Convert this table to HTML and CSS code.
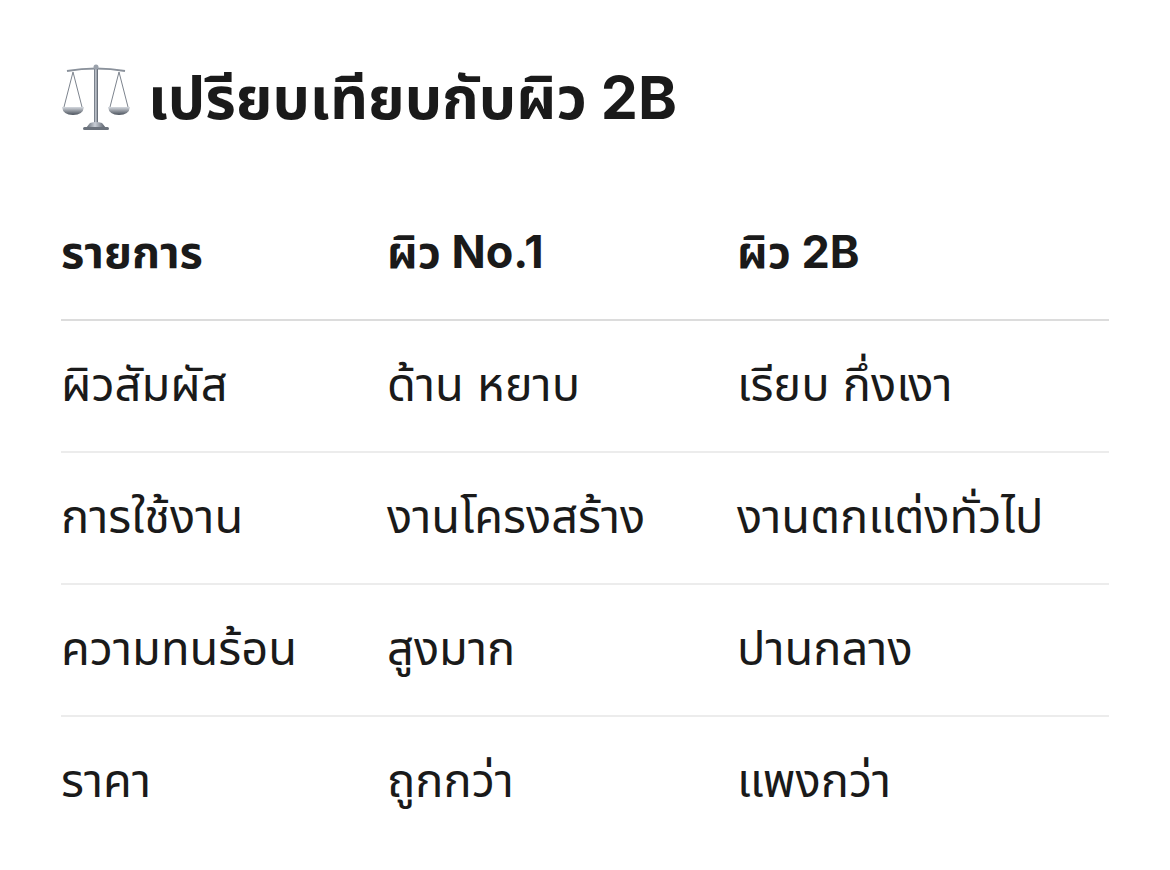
FILE: index.html
```html
<!DOCTYPE html>
<html lang="th">
<head>
<meta charset="utf-8">
<link rel="stylesheet" href="styles.css">
</head>
<body>
<main class="page">
  <h1 class="title">
    <svg class="scales" viewBox="0 0 70 70" width="70" height="70" aria-hidden="true">
      <defs>
        <linearGradient id="metal" x1="0" y1="0" x2="1" y2="0">
          <stop offset="0" stop-color="#5d6570"/>
          <stop offset="0.45" stop-color="#c9ced6"/>
          <stop offset="1" stop-color="#4f5661"/>
        </linearGradient>
        <linearGradient id="pan" x1="0" y1="0" x2="0" y2="1">
          <stop offset="0" stop-color="#d5d9df"/>
          <stop offset="1" stop-color="#4a515b"/>
        </linearGradient>
      </defs>
      <path d="M6 8 Q35 3 64 8" stroke="#8a919b" stroke-width="2" fill="none"/>
      <rect x="33" y="3" width="4" height="60" rx="1.5" fill="url(#metal)"/>
      <circle cx="35" cy="4" r="2.5" fill="#9aa1ab"/>
      <path d="M12 9 L3 44 M12 9 L21 44" stroke="#7d848e" stroke-width="1" fill="none"/>
      <path d="M58 9 L49 44 M58 9 L67 44" stroke="#7d848e" stroke-width="1" fill="none"/>
      <path d="M1 44 H23 Q22 52 12 52 Q2 52 1 44 Z" fill="url(#pan)"/>
      <path d="M47 44 H69 Q68 52 58 52 Q48 52 47 44 Z" fill="url(#pan)"/>
      <path d="M29 60 Q35 58 41 60 L45 65 H25 Z" fill="url(#metal)"/>
      <rect x="22" y="64" width="26" height="3" rx="1.5" fill="#6b727c"/>
    </svg>
    <span>เปรียบเทียบกับผิว 2B</span>
  </h1>
  <table class="compare">
    <colgroup>
      <col class="c1"><col class="c2"><col class="c3">
    </colgroup>
    <thead>
      <tr><th>รายการ</th><th>ผิว No.1</th><th>ผิว 2B</th></tr>
    </thead>
    <tbody>
      <tr><td>ผิวสัมผัส</td><td>ด้าน หยาบ</td><td>เรียบ กึ่งเงา</td></tr>
      <tr><td>การใช้งาน</td><td>งานโครงสร้าง</td><td>งานตกแต่งทั่วไป</td></tr>
      <tr><td>ความทนร้อน</td><td>สูงมาก</td><td>ปานกลาง</td></tr>
      <tr><td>ราคา</td><td>ถูกกว่า</td><td>แพงกว่า</td></tr>
    </tbody>
  </table>
</main>
</body>
</html>
```
FILE: styles.css
```css
html, body {
  margin: 0;
  padding: 0;
  background: #ffffff;
}
body {
  font-family: "Inter", "Noto Sans Thai", "Noto Sans", "DejaVu Sans", sans-serif;
  color: #1a1a1a;
}
.page {
  padding: 58px 62px 0 61px;
}
.title {
  display: flex;
  align-items: center;
  gap: 17px;
  margin: 0;
  height: 80px;
  font-size: 59px;
  font-weight: 700;
  line-height: 80px;
  letter-spacing: 0;
}
.scales {
  flex: none;
  width: 70px;
  height: 70px;
}
.compare {
  margin-top: 51px;
  width: 1048px;
  border-collapse: collapse;
  font-size: 47px;
}
.c1 { width: 326px; }
.c2 { width: 350px; }
.c3 { width: 372px; }
.compare th,
.compare td {
  text-align: left;
  padding: 31px 0 35px 0;
  line-height: 64px;
  vertical-align: middle;
}
.compare th {
  font-weight: 700;
  font-size: 45px;
  border-bottom: 2px solid #dcdcdc;
}
.compare td {
  font-weight: 400;
}
.compare tbody tr + tr td {
  border-top: 2px solid #ececec;
}
```
